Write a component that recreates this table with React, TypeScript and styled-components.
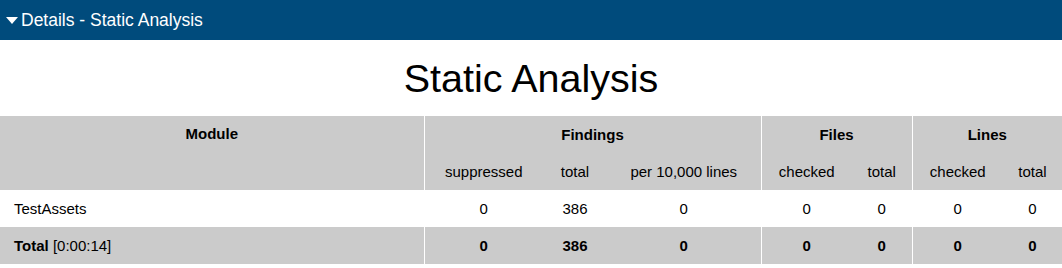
import React from 'react';
import styled, { createGlobalStyle } from 'styled-components';

const GlobalStyle = createGlobalStyle`
  html, body {
    margin: 0;
    padding: 0;
    background: #ffffff;
    font-family: "Liberation Sans", Arial, sans-serif;
    color: #000000;
  }
`

const DetailsBar = styled.div`
  height: 40px;
  background: #004b7c;
  color: #ffffff;
  display: flex;
  align-items: center;
  padding-left: 6px;
  font-size: 17.5px;
`

const Caret = styled.span`
  width: 0;
  height: 0;
  border-left: 6.5px solid transparent;
  border-right: 6.5px solid transparent;
  border-top: 7px solid #ffffff;
  margin-right: 3px;
  margin-top: 1px;
`

const Title = styled.h1`
  margin: 0;
  height: 76px;
  display: flex;
  align-items: center;
  justify-content: center;
  font-size: 39.5px;
  font-weight: normal;
`

const Table = styled.table`
  width: 1062px;
  border-collapse: collapse;
  table-layout: fixed;
  font-size: 15px;
`

const Row = styled.tr<{ $shaded?: boolean }>`
  background: ${p => (p.$shaded ? '#cbcbcb' : '#ffffff')};
  height: 37px;
`

const Cell = styled.td<{ $sep?: boolean; $left?: boolean; $bold?: boolean }>`
  padding: 0 14px;
  text-align: ${p => (p.$left ? 'left' : 'center')};
  font-weight: ${p => (p.$bold ? 'bold' : 'normal')};
  border-left: ${p => (p.$sep ? '1px solid #ffffff' : '0')};
  white-space: nowrap;
`

const Head = styled.th<{ $sep?: boolean; $top?: boolean }>`
  padding: ${p => (p.$top ? '9px 8px 0' : '0 8px')};
  vertical-align: ${p => (p.$top ? 'top' : 'middle')};
  text-align: center;
  font-weight: bold;
  border-left: ${p => (p.$sep ? '1px solid #ffffff' : '0')};
`

const SubHead = styled.th<{ $sep?: boolean }>`
  padding: 0 4px;
  text-align: center;
  font-weight: normal;
  white-space: nowrap;
  border-left: ${p => (p.$sep ? '1px solid #ffffff' : '0')};
`

const Duration = styled.span`
  font-weight: normal;
`

const widths = [424, 119, 64, 154, 91, 60, 91, 59];
const groupStarts = [1, 4, 6];

const rows = [
  { name: 'TestAssets', values: ['0', '386', '0', '0', '0', '0', '0'] },
];
const totals = ['0', '386', '0', '0', '0', '0', '0'];

function App() {
  return (
    <>
      <GlobalStyle />
      <DetailsBar>
        <Caret />
        Details - Static Analysis
      </DetailsBar>
      <Title>Static Analysis</Title>
      <Table>
        <colgroup>
          {widths.map((w, i) => (
            <col key={i} style={{ width: w }} />
          ))}
        </colgroup>
        <thead>
          <Row $shaded>
            <Head rowSpan={2} $top>Module</Head>
            <Head colSpan={3} $sep>Findings</Head>
            <Head colSpan={2} $sep>Files</Head>
            <Head colSpan={2} $sep>Lines</Head>
          </Row>
          <Row $shaded>
            <SubHead $sep>suppressed</SubHead>
            <SubHead>total</SubHead>
            <SubHead>per 10,000 lines</SubHead>
            <SubHead $sep>checked</SubHead>
            <SubHead>total</SubHead>
            <SubHead $sep>checked</SubHead>
            <SubHead>total</SubHead>
          </Row>
        </thead>
        <tbody>
          {rows.map(r => (
            <Row key={r.name}>
              <Cell $left>{r.name}</Cell>
              {r.values.map((v, i) => (
                <Cell key={i} $sep={groupStarts.includes(i + 1)}>{v}</Cell>
              ))}
            </Row>
          ))}
          <Row $shaded>
            <Cell $left $bold>
              Total <Duration>[0:00:14]</Duration>
            </Cell>
            {totals.map((v, i) => (
              <Cell key={i} $bold $sep={groupStarts.includes(i + 1)}>{v}</Cell>
            ))}
          </Row>
        </tbody>
      </Table>
    </>
  );
}

export default App;
